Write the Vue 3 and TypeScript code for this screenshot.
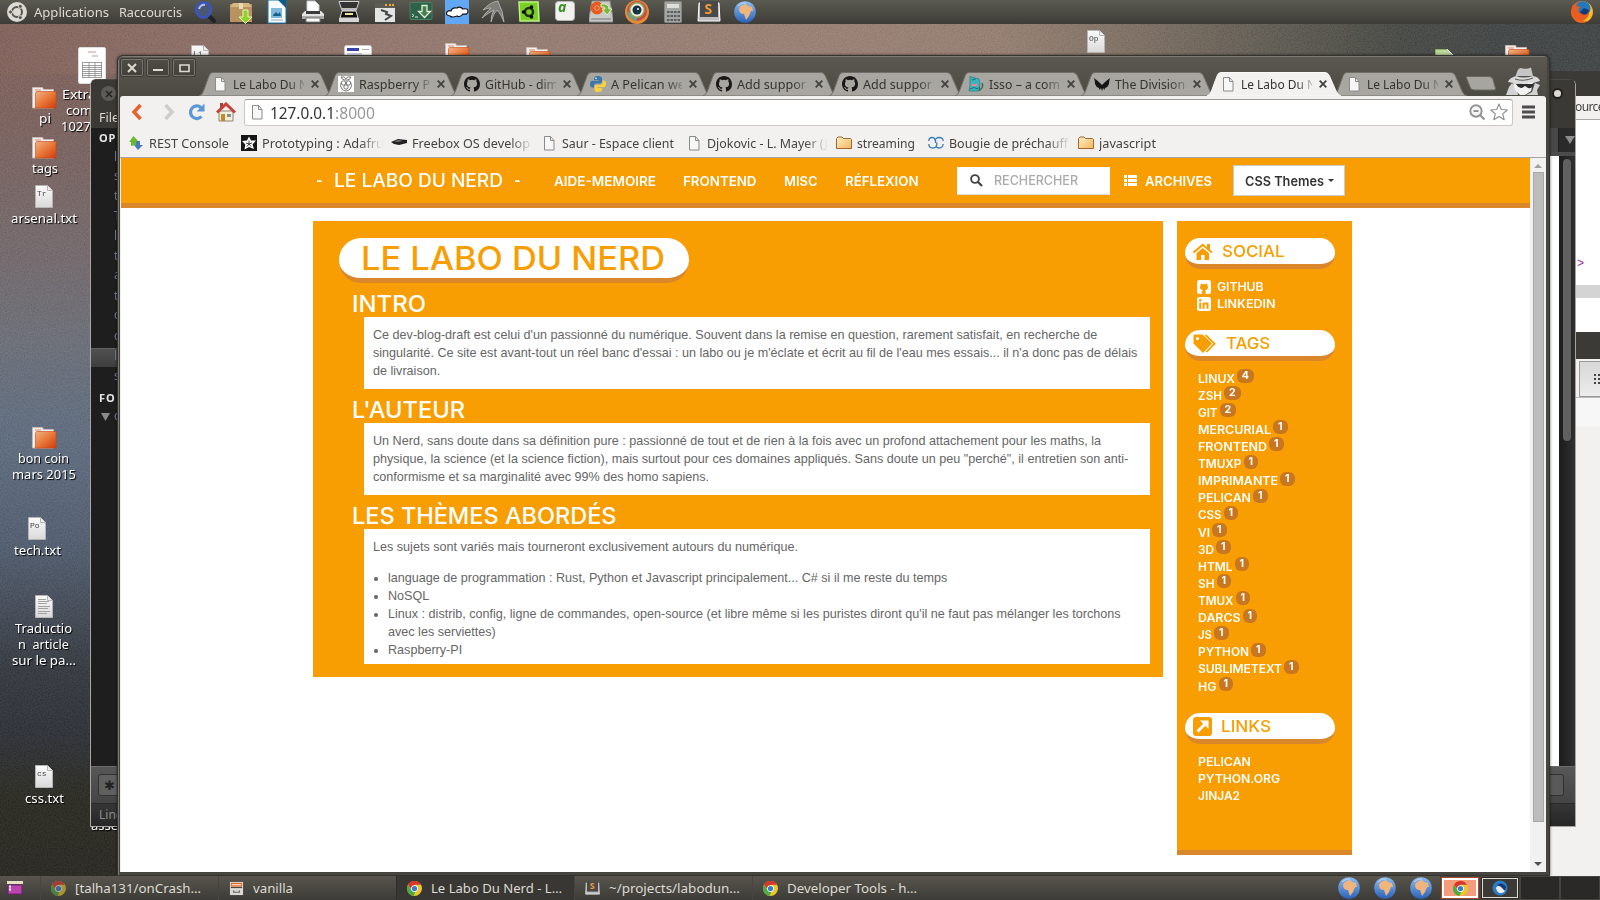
<script setup lang="ts">
// Stretches or condenses a label horizontally to a given advance width.
const vFit = {
  mounted(el: HTMLElement, binding: { value: number }) {
    if (!binding.value) return
    const natural = el.getBoundingClientRect().width
    el.style.transform = `scaleX(${binding.value / natural})`
    el.style.marginRight = `${binding.value - natural}px`
  },
}

const launchers = ['search', 'box', 'writer', 'printer', 'scanner', 'term', 'down', 'cloud', 'bird', 'ubgreen', 'letter', 'disk', 'eye', 'calc', 'sublime', 'globe']

const tabs = [
  { icon: 'page', text: 'Le Labo Du N', w: 75 },
  { icon: 'pi', text: 'Raspberry P', w: 71 },
  { icon: 'github', text: 'GitHub - dim', w: 73 },
  { icon: 'python', text: 'A Pelican we', w: 74 },
  { icon: 'github', text: 'Add suppor', w: 69 },
  { icon: 'github', text: 'Add suppor', w: 69 },
  { icon: 'isso', text: 'Isso – a com', w: 71 },
  { icon: 'division', text: 'The Division', w: 70 },
  { icon: 'page', text: 'Le Labo Du N', w: 75, active: true },
  { icon: 'page', text: 'Le Labo Du N', w: 75 },
]

const bookmarks = [
  { icon: 'rest', text: 'REST Console', w: 80, box: 92 },
  { icon: 'adafruit', text: 'Prototyping : Adafru', w: 122, box: 129, fade: true },
  { icon: 'freebox', text: 'Freebox OS develop', w: 118, box: 129, fade: true },
  { icon: 'page', text: 'Saur - Espace client', w: 112, box: 124 },
  { icon: 'page', text: 'Djokovic - L. Mayer (J', w: 121, box: 129, fade: true },
  { icon: 'folder', text: 'streaming', w: 58, box: 71 },
  { icon: 'rings', text: 'Bougie de préchauff', w: 119, box: 129, fade: true },
  { icon: 'folder', text: 'javascript', w: 57, box: 60 },
]

const nav = [
  { text: 'AIDE-MEMOIRE', w: 102 },
  { text: 'FRONTEND', w: 73.5 },
  { text: 'MISC', w: 33.5 },
  { text: 'RÉFLEXION', w: 73.5 },
]

const tags = [
  { t: 'LINUX', w: 37, n: 4 }, { t: 'ZSH', w: 24, n: 2 }, { t: 'GIT', w: 19.5, n: 2 },
  { t: 'MERCURIAL', w: 73, n: 1 }, { t: 'FRONTEND', w: 69, n: 1 }, { t: 'TMUXP', w: 43.5, n: 1 },
  { t: 'IMPRIMANTE', w: 80, n: 1 }, { t: 'PELICAN', w: 53, n: 1 }, { t: 'CSS', w: 23.5, n: 1 },
  { t: 'VI', w: 12, n: 1 }, { t: '3D', w: 16, n: 1 }, { t: 'HTML', w: 34.5, n: 1 },
  { t: 'SH', w: 16.5, n: 1 }, { t: 'TMUX', w: 35.5, n: 1 }, { t: 'DARCS', w: 42.5, n: 1 },
  { t: 'JS', w: 14, n: 1 }, { t: 'PYTHON', w: 51, n: 1 }, { t: 'SUBLIMETEXT', w: 84, n: 1 },
  { t: 'HG', w: 18.5, n: 1 },
]

const links = [{ t: 'PELICAN', w: 53 }, { t: 'PYTHON.ORG', w: 82 }, { t: 'JINJA2', w: 42 }]

const desktop = [
  { kind: 'dfolder', x: 32, y: 87 }, { kind: 'dfolder', x: 32, y: 137 }, { kind: 'dfolder', x: 32, y: 427 },
  { kind: 'dfolder', x: 445, y: 43 }, { kind: 'dfolder', x: 526, y: 47 }, { kind: 'dfolder', x: 1505, y: 45 },
  { kind: 'dfile', x: 35, y: 185, mark: 'Tr' }, { kind: 'dfile', x: 28, y: 517, mark: 'Po' },
  { kind: 'dtext', x: 35, y: 595 }, { kind: 'dfile', x: 35, y: 765, mark: 'cs' },
  { kind: 'dfile', x: 191, y: 45, mark: 'Li' }, { kind: 'dfile', x: 1087, y: 30, mark: 'Op' },
  { kind: 'dgreen', x: 1435, y: 49 }, { kind: 'dsheet', x: 78, y: 47 }, { kind: 'dcard', x: 344, y: 45 },
]

const captions = [
  { text: 'pi', x: 39, y: 110, w: 12 }, { text: 'tags', x: 32, y: 160, w: 26 },
  { text: 'arsenal.txt', x: 11, y: 210, w: 66 },
  { text: 'Extra', x: 62, y: 86, w: 34 }, { text: 'comp', x: 66, y: 102, w: 34 }, { text: '10270', x: 61, y: 118, w: 37 },
  { text: 'bon coin', x: 18, y: 450, w: 51 }, { text: 'mars 2015', x: 12, y: 466, w: 64 },
  { text: 'tech.txt', x: 14, y: 542, w: 47 }, { text: 'Traductio', x: 15, y: 620, w: 57 },
  { text: 'n  article', x: 18, y: 636, w: 51 }, { text: 'sur le pa…', x: 12, y: 652, w: 64 },
  { text: 'css.txt', x: 25, y: 790, w: 39 }, { text: 'assets', x: 91, y: 817, w: 38 },
]

const sideLetters = [
  { c: 'l', y: 158 }, { c: 's', y: 177 }, { c: 't', y: 197 }, { c: 'T', y: 217 }, { c: 'l', y: 237 }, { c: 't', y: 257 },
  { c: 'a', y: 276 }, { c: 't', y: 297 }, { c: 'c', y: 316 }, { c: 'c', y: 337 }, { c: 'l', y: 357 }, { c: 's', y: 377 }, { c: 'c', y: 417 },
]

const tasks = [
  { icon: 'chrome', text: '[talha131/onCrash…', w: 126, dim: true },
  { icon: 'cabinet', text: 'vanilla', w: 40 },
  { icon: 'chrome', text: 'Le Labo Du Nerd - L…', w: 131, active: true },
  { icon: 'sublime', text: '~/projects/labodun…', w: 131 },
  { icon: 'chrome', text: 'Developer Tools - h…', w: 130 },
]
</script>

<template>
  <div class="screen">
    <svg class="defs" width="0" height="0">
      <defs>
        <linearGradient id="gOrange" x1="0" y1="0" x2="1" y2="1"><stop offset="0" stop-color="#f3b183" /><stop offset=".5" stop-color="#e77838" /><stop offset="1" stop-color="#d23a0c" /></linearGradient>
        <linearGradient id="gBlue" x1="0" y1="0" x2="0" y2="1"><stop offset="0" stop-color="#8fbdf0" /><stop offset="1" stop-color="#2a62b8" /></linearGradient>
        <linearGradient id="gPaper" x1="0" y1="0" x2="0" y2="1"><stop offset="0" stop-color="#fbfbfb" /><stop offset="1" stop-color="#d9d9d9" /></linearGradient>
        <linearGradient id="gFolder" x1="0" y1="0" x2="1" y2="1"><stop offset="0" stop-color="#ffeec4" /><stop offset="1" stop-color="#f4b860" /></linearGradient>
        <filter id="grain" x="0" y="0" width="100%" height="100%"><feTurbulence type="fractalNoise" baseFrequency=".7" numOctaves="2" /><feColorMatrix values="1 0 0 0 0  1 0 0 0 0  1 0 0 0 0  0 0 0 0 1" /></filter>
      </defs>
      <symbol id="ubuntu" viewBox="0 0 24 24"><circle cx="12" cy="12" r="10" fill="#dcdad4" /><circle cx="12" cy="12" r="5" fill="none" stroke="#55534c" stroke-width="2" /><g fill="#55534c" stroke="#dcdad4"><circle cx="5.500" cy="12" r="2" /><circle cx="15.300" cy="6.400" r="2" /><circle cx="15.300" cy="17.600" r="2" /></g></symbol>
      <symbol id="search" viewBox="0 0 24 24"><path d="M15 15l6 6" stroke="#222" stroke-width="4" stroke-linecap="round" /><circle cx="10.500" cy="10" r="7.500" fill="#4b5873" stroke="#3a55c0" stroke-width="2.500" /><path d="M6 9a5 5 0 0 1 6-4" stroke="#b5c3e8" stroke-width="2" fill="none" /></symbol>
      <symbol id="box" viewBox="0 0 24 24"><path d="M1 4h22v18H1z" fill="#b9935f" /><path d="M1 7l3-4h16l3 4z" fill="#d6b684" /><path d="M10 3h4v6h-4z" fill="#eed9ae" /><path d="M14 10h5v7h4l-6.500 6.500L10 17h4z" fill="#92d32b" stroke="#e5f7b5" /></symbol>
      <symbol id="writer" viewBox="0 0 24 24"><path d="M3 0h12l6 6v17H3z" fill="#f8fbfd" stroke="#1f74a8" /><path d="M13 0h8v8z" fill="#075f91" /><rect x="6" y="8" width="11" height="10" fill="#82b9da" /><path d="M8 15l3-3 2 2 2-2 1 4H8z" fill="#10618c" /><path d="M6 20h12" stroke="#9ab" /></symbol>
      <symbol id="printer" viewBox="0 0 24 24"><path d="M6 1h8l4 4v8H6z" fill="#fff" stroke="#ccc" /><path d="M1 14l3-3h16l3 3v4H1z" fill="#e2e2e2" /><path d="M5 11h14v3H5z" fill="#3c3c3c" /><path d="M1 16h22v3H1z" fill="#a9a9a9" /><path d="M5 18h14v4H5z" fill="#fff" stroke="#777" /></symbol>
      <symbol id="scanner" viewBox="0 0 24 24"><path d="M2 1.500h20l-3 9H5z" fill="#333" stroke="#d5d5d5" /><path d="M5 8h14v3H5z" fill="#bbb" /><path d="M5 11h14l2 7H3z" fill="#111" stroke="#ddd" /><path d="M8 14h8" stroke="#eee498" stroke-width="2" /><path d="M2 18h20v4H2z" fill="#d5d5d5" /></symbol>
      <symbol id="term" viewBox="0 0 24 24"><rect x="2" y="3" width="20" height="19" fill="#e3e5e5" /><path d="M2 3h20v5H2z" fill="#5c5b56" /><path d="M12 5h2m2 0h2m1 0h2" stroke="#e8ae33" stroke-width="2" /><path d="M8 10l6 2-1 2 5 2-6 4" fill="none" stroke="#444" stroke-width="2" /></symbol>
      <symbol id="down" viewBox="0 0 24 24"><rect x="1" y="2.500" width="22" height="17" rx="1" fill="#2d6149" stroke="#4f7f62" /><path d="M3 14l2 1.500L3 17M6 17h3" stroke="#d7e9ce" fill="none" /><path d="M13 5.500h5v6h3.500l-6 6-6-6H13z" fill="#477c50" stroke="#dff3ce" stroke-width="1.300" /></symbol>
      <symbol id="cloud" viewBox="0 0 24 24"><path d="M0 0h24v24H0z" fill="#62a7f3" /><path d="M5 16q-5-1-3-4 2-2 4-1 1-4 6-3 3-2 6 1 5-1 5 2 0 4-5 3-3 4-6 2-5 2-7 0z" fill="#fff" stroke="#111" stroke-width="1.200" /></symbol>
      <symbol id="bird" viewBox="0 0 24 24"><path d="M2 10Q9 2 17 1l1 3q4 7 5 18-3-8-7-12-4 4-6 12 0-8 3-12-6 3-12 8 4-6 9-10-4 0-8 2z" fill="#7f7f7b" stroke="#c6c6c3" stroke-width=".7" /></symbol>
      <symbol id="ubgreen" viewBox="0 0 24 24"><path d="M2 2h19l1 19H3z" fill="#79cf26" stroke="#bdf381" stroke-width="1.500" /><circle cx="12" cy="12" r="4" fill="none" stroke="#22301a" stroke-width="2.500" /><circle cx="6.500" cy="12" r="1.800" /><circle cx="14.500" cy="7" r="1.800" /><circle cx="14.500" cy="17" r="1.800" /></symbol>
      <symbol id="letter" viewBox="0 0 24 24"><rect x="2.500" y="1.500" width="19" height="19" rx="3" fill="#f1f1ef" stroke="#b8b8b5" /><text x="5" y="12" font-family="Open Sans" font-size="14" font-weight="bold" font-style="italic" fill="#37901e">a</text></symbol>
      <symbol id="disk" viewBox="0 0 24 24"><path d="M3 1h18l3 17v4H0v-4z" fill="#c9c9c9" stroke="#888" /><circle cx="8" cy="8" r="4.500" fill="none" stroke="#e85b1e" stroke-width="4" /><circle cx="8" cy="8" r="2" fill="#e85b1e" /><path d="M12 4q8-1 8 5h3l-5 6-5-6h3q0-3-4-2z" fill="#7ab742" stroke="#e1f1ba" /><path d="M2 19h20" stroke="#777" /></symbol>
      <symbol id="eye" viewBox="0 0 24 24"><circle cx="12" cy="12" r="12" fill="#e78b39" /><circle cx="12" cy="11" r="10" fill="#cf4542" /><path d="M2 11a10 10 0 0 0 10 10v-4z" fill="#6aa08b" /><circle cx="12" cy="10" r="8" fill="#8ba25b" /><circle cx="12" cy="10" r="6.500" fill="#f1eadc" /><circle cx="12" cy="10" r="4.500" fill="#143345" /><circle cx="13" cy="9" r="1" fill="#fff" /></symbol>
      <symbol id="calc" viewBox="0 0 24 24"><rect x="3.500" y="1.500" width="17" height="21" rx="1" fill="#a5a5a2" stroke="#848480" /><path d="M6 4h12v4H6z" fill="#dde0da" /><path d="M6 12h13M6 16h13M6 20h13" stroke="#555f63" stroke-width="2" stroke-dasharray="2.500 1" /></symbol>
      <symbol id="sublime" viewBox="0 0 24 24"><path d="M2 3h20l1 18H1z" fill="#bdbdbd" stroke="#fff" /><path d="M3 1h18v16H3z" fill="#494949" /><text x="7.500" y="13.500" font-family="Open Sans" font-size="14" font-weight="bold" fill="#f29a31">S</text></symbol>
      <symbol id="globe" viewBox="0 0 24 24"><circle cx="12" cy="12" r="10.800" fill="url(#gBlue)" /><path d="M6 9q1-4 7-5l2 2 4 1 1 4h-2l-2 5-3 4-2-6q-5 0-5-5z" fill="#efb57d" /><path d="M5 6q4-4 8-3" stroke="#b8d7ff" fill="none" /></symbol>
      <symbol id="firefox" viewBox="0 0 24 24"><circle cx="12" cy="12" r="11" fill="#ee6321" /><path d="M12 1a11 11 0 0 1 9 17q-3 4-8 3 9-7 5-14-3-5-9-5z" fill="#f7bd26" /><circle cx="13" cy="8.500" r="7.500" fill="#2579b9" /><path d="M14 8l5 2q-1 6-5 7l-5-4z" fill="#173a7a" /><path d="M2 6q3-3 4 0l5 1q-4 2-2 5l3 2q4 2 7-2 0 7-7 8Q1 20 2 6z" fill="#e85d20" /></symbol>
      <symbol id="page" viewBox="0 0 16 16"><path d="M3.500 1.500h6l3.500 4v9.500H3.500z" fill="#f7f7f7" stroke="#8b8b8b" /><path d="M9.500 1.500v4H13" fill="none" stroke="#8b8b8b" /></symbol>
      <symbol id="pi" viewBox="0 0 16 16"><path d="M0 0h16v16H0z" fill="#fff" /><g fill="none" stroke="#777"><path d="M3 1q4-1 5 2 1-3 5-2-1 3-4 3H7Q4 4 3 1z" /><circle cx="5.500" cy="7" r="2.200" /><circle cx="10.500" cy="7" r="2.200" /><circle cx="8" cy="11" r="2.200" /><path d="M3.500 6Q1 10 4 13q4 4 8 0 3-3 .500-7" /></g></symbol>
      <symbol id="github" viewBox="0 0 16 16"><path fill="#191717" d="M8 0C3.580 0 0 3.580 0 8c0 3.540 2.290 6.530 5.470 7.590.4.070.55-.17.55-.38 0-.19-.01-.82-.01-1.490-2.010.37-2.530-.49-2.690-.94-.09-.23-.48-.94-.82-1.130-.28-.15-.68-.52-.01-.53.63-.01 1.080.58 1.230.82.72 1.210 1.870.87 2.330.66.070-.52.28-.87.51-1.070-1.780-.2-3.640-.89-3.640-3.950 0-.87.31-1.590.82-2.150-.08-.2-.36-1.020.08-2.120 0 0 .67-.21 2.200.82a7.600 7.600 0 0 1 4 0c1.530-1.040 2.200-.82 2.200-.82.44 1.100.16 1.920.08 2.120.51.56.82 1.270.82 2.150 0 3.070-1.870 3.750-3.650 3.950.29.25.54.73.54 1.480 0 1.070-.01 1.930-.01 2.200 0 .21.15.46.55.38A8.010 8.010 0 0 0 16 8c0-4.420-3.580-8-8-8z" /></symbol>
      <symbol id="python" viewBox="0 0 16 16"><path d="M8 0Q4 0 4 2.500V4h4.500v.7H2.500Q0 5 0 8.200q0 3.300 2.500 3.300H4V9.300Q4 7.500 6 7.500h4q2 0 2-2v-3Q12 0 8 0z" fill="#3b77a8" /><path d="M8 16q4 0 4-2.500V12H7.500v-.7h6Q16 11 16 7.800q0-3.300-2.500-3.300H12.500v2.200q0 2-2 2h-4q-2 0-2 2v3Q4.500 16 8 16z" fill="#f9d03f" /><circle cx="6" cy="2.200" r=".8" fill="#fff" /></symbol>
      <symbol id="isso" viewBox="0 0 16 16"><path d="M2 .5l5 1.500 4 1 1 5-1 7H1l1-6z" fill="#3bb4bd" stroke="#17737d" stroke-width=".6" /><path d="M4 4l4-1M2 13q4-3 8 0" stroke="#17737d" fill="none" /><path d="M4 8q2 3 5 0" stroke="#f9808f" stroke-width="2" fill="none" /><path d="M14 7q2 4-2 7l-1-3" stroke="#465" stroke-width="1.500" fill="none" /></symbol>
      <symbol id="division" viewBox="0 0 16 16"><path d="M0 2q4 3 6 5l2 2 2-2q2-2 6-5-1 3-1 6-1 3-4 4l-.5 2-1.500-2L8 15l-1-3-1.500 2L5 12Q2 11 1 8 1 5 0 2z" fill="#151515" /></symbol>
      <symbol id="rest" viewBox="0 0 16 16"><path d="M8 6h4v4h3L10 15l-4-5h2z" fill="#497ab9" /><path d="M5.500 1L10 6l-2 .5V10L3 11V7H1z" fill="#6bb92d" /></symbol>
      <symbol id="adafruit" viewBox="0 0 16 16"><path d="M0 0h16v16H0z" fill="#161616" /><path d="M8 1.500l2 4 5 0-3.500 4 1.500 4.500-5-2-4.500 2.500.8-5L1 6l5-.5z" fill="#fff" /><path d="M8 9V5.500M8 9l3-1M8 9L5 8M8 9l2 2.500M8 9l-2 2.500" stroke="#161616" stroke-width=".8" /></symbol>
      <symbol id="freebox" viewBox="0 0 16 16"><path d="M0 7l7-3 9 1v3l-8 2-5-1z" fill="#222" /><path d="M3 6l5-1 4 1-6 1z" fill="#777" /></symbol>
      <symbol id="folder" viewBox="0 0 16 16"><path d="M.5 13.500V3.500L2 2h4l1.500 1.500h7l1 1v9z" fill="url(#gFolder)" stroke="#a2672e" /></symbol>
      <symbol id="rings" viewBox="0 0 16 16"><g fill="none" stroke="#3a7dbb" stroke-width="1.300"><path d="M7 5.500Q7 2.500 4 2.500T.800 6M.8 9q0 4 4 4t4-4V7.500M15.200 6q0-3.500-4-3.500T7.500 6v2M15.200 9q-.5 4-4 4-3 0-3-2.500" /></g></symbol>
      <symbol id="chrome" viewBox="0 0 16 16"><circle cx="8" cy="8" r="8" fill="#e9c829" /><path d="M1 4a8 8 0 0 1 14 0H8L5 9z" fill="#d8362a" /><path d="M1 4l4 6 4 1-2 5A8 8 0 0 1 1 4z" fill="#4fa944" /><circle cx="8" cy="8" r="3.600" fill="#fff" /><circle cx="8" cy="8" r="2.800" fill="#3c7ad0" /></symbol>
      <symbol id="cabinet" viewBox="0 0 16 16"><path d="M1 1h14v14H1z" fill="#d9d8d2" /><path d="M2 2h12v4H2z" fill="#e26c27" /><path d="M3 4h10" stroke="#fff" /><path d="M2 7h12" stroke="#333" /><path d="M5 10v2h6v-2" fill="none" stroke="#666" stroke-width="1.300" /></symbol>
      <symbol id="dfolder" viewBox="0 0 28 40"><path d="M.5 21V.5h10l1 2h10V21z" fill="#eee" stroke="#c9b9b2" /><path d="M3 3h6" stroke="#e88660" /><path d="M3.500 21V6l1-1.500H24V21z" fill="url(#gOrange)" stroke="#c8451a" stroke-width=".6" /></symbol>
      <symbol id="dfile" viewBox="0 0 28 40"><path d="M.5.500h12l5 5v17H.5z" fill="url(#gPaper)" stroke="#b5b5b5" /><path d="M12.500.500v5h5" fill="#eee" stroke="#b5b5b5" /></symbol>
      <symbol id="dtext" viewBox="0 0 28 40"><path d="M.5.500h12l5 5v17H.5z" fill="url(#gPaper)" stroke="#b5b5b5" /><path d="M12.500.500v5h5" fill="#eee" stroke="#b5b5b5" /><path d="M3 4.500h8M3 6.500h11M3 8.500h9M3 11.500h12M3 13.500h10M3 16.500h12M3 18.500h9" stroke="#999" stroke-width=".9" /></symbol>
      <symbol id="dgreen" viewBox="0 0 28 40"><path d="M.5.500h12l5 5v17H.5z" fill="#bcd69c" stroke="#8bae68" /><path d="M12.500.500l5 5z" fill="#fff" stroke="#fff" /></symbol>
      <symbol id="dsheet" viewBox="0 0 28 40"><rect x=".5" y=".5" width="27" height="36" rx="1.500" fill="#fff" stroke="#ddd" /><path d="M10 5h8M14 9h6" stroke="#c99" /><path d="M4 15.500h20M4 18.500h20M4 20.500h20M4 22.500h20M4 24.500h20M4 26.500h20M4 28.500h20M4 30.500h20M4.500 15v16M11 15v16M17 15v16M23.500 15v16" stroke="#888" stroke-width=".8" /></symbol>
      <symbol id="dcard" viewBox="0 0 28 40"><rect x=".5" y=".5" width="27" height="30" rx="2" fill="#fff" stroke="#ccc" /><path d="M3 4.500h12" stroke="#3a3fae" stroke-width="3" /><path d="M18 4.500h7M3 9h15" stroke="#aab" /></symbol>
    </svg>
    <svg class="grain" width="1600" height="876"><rect width="1600" height="876" filter="url(#grain)" /></svg>

    <header class="panel">
      <svg class="ico24 ubu"><use href="#ubuntu" /></svg>
      <span v-fit="75" class="fit">Applications</span>
      <span v-fit="63" class="fit">Raccourcis</span>
      <div class="launchers"><svg v-for="l in launchers" :key="l" class="ico24"><use :href="'#' + l" /></svg></div>
      <svg class="ico24 ffx"><use href="#firefox" /></svg>
    </header>

    <svg v-for="(d, i) in desktop" :key="'d' + i" class="desk" viewBox="0 0 28 40" :style="{ left: d.x + 'px', top: d.y + 'px' }">
      <use :href="'#' + d.kind" width="28" height="40" />
      <text v-if="d.mark" x="2" y="10.500" class="mark">{{ d.mark }}</text>
    </svg>
    <div v-for="(c, i) in captions" :key="'c' + i" class="caption" :style="{ left: c.x + 'px', top: c.y + 'px' }"><span v-fit="c.w" class="fit">{{ c.text }}</span></div>

    <!-- inspector window on the far right -->
    <section class="inspector">
      <div class="ins-title"></div>
      <div class="ins-tabs">ource</div>
      <div class="ins-code"><span>&gt;</span></div>
      <div class="ins-sel"></div>
      <div class="ins-gap"></div>
      <div class="ins-dark"></div>
      <div class="ins-btn"><svg width="8" height="12"><path d="M1 2h2M5 2h2M1 6h2M5 6h2M1 10h2M5 10h2" stroke="#444" stroke-width="2" /></svg></div>
      <div class="ins-rest"></div>
    </section>

    <!-- editor window behind the browser -->
    <section class="editor">
      <div class="ed-head">
        <div class="ed-close"><svg width="8" height="8"><path d="M1 1l6 6M7 1L1 7" stroke="#222" stroke-width="1.500" /></svg></div>
        <i class="ed-dot"></i>
        <div class="ed-menu">File</div>
      </div>
      <div class="ed-body">
        <div class="ed-side"><b>OPEN</b></div>
        <div class="ed-right">
          <div class="ed-tabrow"><span></span><svg width="16" height="24"><path d="M6 8h10l-5 8z" fill="#8f8f8f" /></svg></div>
          <div class="ed-cols"><i></i><div><em></em></div></div>
        </div>
      </div>
      <div class="ed-find"><span>✱</span><i></i></div>
      <div class="ed-status">Line</div>
    </section>
    <div class="selrow"></div>
    <div v-for="s in sideLetters" :key="s.y" class="sl" :style="{ top: s.y - 9 + 'px' }">{{ s.c }}</div>
    <div class="fo">FO</div>
    <svg class="tri" width="10" height="8"><path d="M0 0h9l-4.500 8z" fill="#8a8a8a" /></svg>

    <!-- browser -->
    <section class="browser">
      <div class="frame-top">
        <div class="winbtns">
          <button><svg width="10" height="10"><path d="M1 1l8 8M9 1L1 9" stroke="#dfdbd2" stroke-width="2" /></svg></button>
          <button><svg width="10" height="10"><path d="M0 7h10" stroke="#dfdbd2" stroke-width="2" /></svg></button>
          <button><svg width="11" height="10"><path d="M1 2h9v6.500H1z" fill="none" stroke="#dfdbd2" stroke-width="1.600" /></svg></button>
        </div>
        <div class="tabs">
          <div v-for="(t, i) in tabs" :key="i" class="tab" :class="{ on: t.active }">
            <svg class="tabshape" viewBox="0 0 134 24"><path d="M0 24Q3 23 4.500 19L10 4Q11 .5 14 .5H118Q121 .5 122.500 4L129 19Q130.500 23 134 24z" /></svg>
            <svg class="ico16"><use :href="'#' + t.icon" /></svg>
            <div class="tabtext"><span v-fit="t.w" class="fit">{{ t.text }}</span></div>
            <svg class="tabx" width="8" height="8"><path d="M.7.700l6.600 6.600M7.300.700L.7 7.300" /></svg>
          </div>
          <svg class="newtab" width="30" height="15"><path d="M1 .5h22q3 0 4 3l2.500 9q0 1.500-2 1.500H8q-3 0-4-3L.5 2Q0 .5 1 .5z" fill="#a7a59f" stroke="#6a6862" /></svg>
          <svg class="incog" width="34" height="28" viewBox="0 0 34 28"><path d="M9.500 9L12 2.500q2-2.500 5-1 4 1 8-1L27 9z" fill="#c5c5c5" /><path d="M2 15q1-4 8-6 7 3 17 0 6 1 7 5-8 3-16 3T2 15z" fill="#dadada" /><path d="M6 16l-3 4-3 8h12l-1-6zM29 16l5 2-3 5 1 5H20l6-3z" fill="#d2d2d2" /><path d="M7 16q10 2 20-1l-2 9-6 4h-5l-5-5z" fill="#f2f2f2" /><path d="M9 12q8 3 18-1" stroke="#555" fill="none" /><path d="M10 17h17v2q-2 3-5 2l-3-2-3 2q-4 0-6-4z" fill="#2e2e2e" /></svg>
        </div>
      </div>

      <div class="toolbar">
        <svg class="t-back" width="12" height="18"><path d="M9.500 2L3 9l6.500 7" fill="none" stroke="#e8622a" stroke-width="3.500" /></svg>
        <svg class="t-fwd" width="12" height="18"><path d="M2.500 2L9 9l-6.500 7" fill="none" stroke="#cfcdca" stroke-width="3.500" /></svg>
        <svg class="t-rel" width="18" height="18"><path d="M13.500 13.500A6.300 6.300 0 1 1 13 4.500" fill="none" stroke="#5b96d5" stroke-width="3.200" /><path d="M16.500.500v8h-8z" fill="#5b96d5" /></svg>
        <svg class="t-home" width="20" height="20"><path d="M3 9h14v10H3z" fill="#f2eedd" stroke="#8d8674" /><path d="M4 1h3v5H4z" fill="#9a4a40" /><path d="M1 10.500L10 2l9 8.500" fill="none" stroke="#c9403a" stroke-width="3" /><path d="M5 12h4v7H5z" fill="#c38a28" /><path d="M11 12h4v3h-4z" fill="#8d8d8d" /></svg>
        <div class="omni">
          <svg class="ico16 op"><use href="#page" /></svg>
          <span v-fit="65" class="fit host">127.0.0.1</span><span v-fit="40" class="fit port">:8000</span>
          <svg class="zoomico" width="17" height="17"><circle cx="7" cy="7" r="5.700" fill="#f6f6f6" stroke="#939393" stroke-width="1.900" /><path d="M4.500 7h5M11 11l4.500 4.500" stroke="#939393" stroke-width="2" /></svg>
          <svg class="star" width="18" height="18"><path d="M9 1l2.300 5.500 6 .5-4.600 3.900 1.500 5.800L9 13.500l-5.200 3.200 1.500-5.800L.7 7l6-.5z" fill="#fff" stroke="#8d8d8d" stroke-width="1.100" stroke-linejoin="round" /></svg>
        </div>
        <svg class="burger" width="13" height="14"><path d="M0 2h13M0 7h13M0 12h13" stroke="#4c4c4c" stroke-width="3" /></svg>
      </div>
      <div class="bookmarks">
        <div v-for="(b, i) in bookmarks" :key="i" class="bm">
          <svg class="ico16"><use :href="'#' + b.icon" /></svg>
          <div class="bmtext" :class="{ fade: b.fade }" :style="{ width: b.box + 'px' }"><span v-fit="b.w" class="fit">{{ b.text }}</span></div>
        </div>
      </div>

      <div class="viewport">
        <div class="page">
          <div class="navbar">
            <div class="brand"><span v-fit="6.500" class="fit">-</span><span v-fit="169" class="fit">LE LABO DU NERD</span><span v-fit="6.500" class="fit">-</span></div>
            <nav><a v-for="n in nav" :key="n.text" v-fit="n.w" class="fit">{{ n.text }}</a></nav>
            <div class="searchbox">
              <svg width="13" height="13"><circle cx="5" cy="5" r="3.900" fill="none" stroke="#444" stroke-width="1.900" /><path d="M8 8l4 4" stroke="#444" stroke-width="2.300" /></svg>
              <span v-fit="84" class="fit">RECHERCHER</span>
            </div>
            <svg class="listico" width="13" height="11"><path d="M0 0h3v3H0zM4 0h9v3H4zM0 4h3v3H0zM4 4h9v3H4zM0 8h3v3H0zM4 8h9v3H4z" fill="#fff" /></svg>
            <a v-fit="67" class="fit archives">ARCHIVES</a>
            <div class="themes"><span v-fit="79" class="fit">CSS Themes</span><i></i></div>
          </div>

          <div class="columns">
            <main>
              <h1><span v-fit="304" class="fit">LE LABO DU NERD</span></h1>
              <h2><span v-fit="74" class="fit">INTRO</span></h2>
              <div class="card">
                <p>Ce dev-blog-draft est celui d'un passionné du numérique. Souvent dans la remise en question, rarement satisfait, en recherche de<br />singularité. Ce site est avant-tout un réel banc d'essai : un labo ou je m'éclate et écrit au fil de l'eau mes essais... il n'a donc pas de délais<br />de livraison.</p>
              </div>
              <h2><span v-fit="113" class="fit">L'AUTEUR</span></h2>
              <div class="card">
                <p>Un Nerd, sans doute dans sa définition pure : passionné de tout et de rien à la fois avec un profond attachement pour les maths, la<br />physique, la science (et la science fiction), mais surtout pour ces domaines appliqués. Sans doute un peu "perché", il entretien son anti-<br />conformisme et sa marginalité avec 99% des homo sapiens.</p>
              </div>
              <h2><span v-fit="264.500" class="fit">LES THÈMES ABORDÉS</span></h2>
              <div class="card last">
                <p>Les sujets sont variés mais tourneront exclusivement autours du numérique.</p>
                <ul>
                  <li>language de programmation : Rust, Python et Javascript principalement... C# si il me reste du temps</li>
                  <li>NoSQL</li>
                  <li>Linux : distrib, config, ligne de commandes, open-source (et libre même si les puristes diront qu'il ne faut pas mélanger les torchons<br />avec les serviettes)</li>
                  <li>Raspberry-PI</li>
                </ul>
              </div>
            </main>

            <aside>
              <div class="block social">
                <h3><svg width="20" height="17"><path d="M.5 9.500L9.700 1.700l9.200 7.800" fill="none" stroke="#f89e02" stroke-width="2" /><path d="M14 1h3v6l-3-2z" fill="#f89e02" /><path d="M3.500 10.300L9.700 5l6.300 5.300V17h-4.500v-5H8v5H3.500z" fill="#f89e02" /></svg><span v-fit="62.500" class="fit s1">SOCIAL</span></h3>
                <ul>
                  <li><svg width="14" height="14"><rect width="14" height="14" rx="2.500" fill="#fff" /><path d="M5.500 14v-2.200q-1.600.2-2.200-1.200M8.600 14v-3q0-.7-.4-1 2.800-.4 2.800-3 0-1-.7-1.800.2-.8-.1-1.700-.9 0-1.700.7-1.500-.4-3 0-.8-.7-1.700-.7-.3.900-.1 1.700-.7.800-.7 1.800 0 2.600 2.800 3-.4.300-.3 1v3z" fill="#f89e02" /></svg><span v-fit="46.500" class="fit">GITHUB</span></li>
                  <li><svg width="14" height="14"><rect width="14" height="14" rx="2.500" fill="#fff" /><path d="M2.200 5.400h2v6.300h-2zM5.500 5.400h2v.9q2.200-2.200 4 .3v5.100h-2V8.200q-.8-1.800-2 0v3.500h-2z" fill="#f89e02" /><circle cx="3.200" cy="3.300" r="1.200" fill="#f89e02" /></svg><span v-fit="58.500" class="fit">LINKEDIN</span></li>
                </ul>
              </div>
              <div class="block tagblock">
                <h3><svg width="24" height="19"><path d="M1 1h8.500l9 8.500-8.500 9L1 9.500z" fill="#f89e02" stroke="#f89e02" stroke-linejoin="round" /><circle cx="4.500" cy="4.500" r="1.600" fill="#fff" /><path d="M12.500 1L21.500 9.700 13.500 18" fill="none" stroke="#f89e02" stroke-width="1.800" /></svg><span v-fit="44" class="fit s2">TAGS</span></h3>
                <ul><li v-for="t in tags" :key="t.t"><span v-fit="t.w" class="fit">{{ t.t }}</span><b :class="{ wide: t.n > 1 }">{{ t.n }}</b></li></ul>
              </div>
              <div class="block linkblock">
                <h3><svg width="19" height="19"><rect width="19" height="19" rx="3" fill="#f89e02" /><path d="M4.500 14.500L12 7" stroke="#fff" stroke-width="3" /><path d="M7 3.500h8.500V12z" fill="#fff" /></svg><span v-fit="50" class="fit s3">LINKS</span></h3>
                <ul><li v-for="l in links" :key="l.t"><span v-fit="l.w" class="fit">{{ l.t }}</span></li></ul>
              </div>
            </aside>
          </div>
        </div>
        <div class="scroll">
          <svg width="16" height="14"><path d="M4 10h8L8 6z" fill="#a0a0a0" /></svg>
          <div class="thumb"></div>
          <svg class="sdown" width="16" height="16"><path d="M4 6h8l-4 4z" fill="#505050" /></svg>
        </div>
      </div>
    </section>

    <footer class="taskbar">
      <div class="showdesk"><svg width="16" height="14"><path d="M0 0h16v3H0z" fill="#e6dfc4" /><path d="M1 4h14v9H1z" fill="#b846ae" stroke="#6e1f6a" /><path d="M2 5.500h2M2 8.500h2" stroke="#fff" stroke-width="2" /></svg></div>
      <div v-for="(t, i) in tasks" :key="i" class="task" :class="{ on: t.active, dim: t.dim }">
        <svg class="ico15"><use :href="'#' + t.icon" /></svg><span v-fit="t.w" class="fit">{{ t.text }}</span>
      </div>
      <div class="tray">
        <svg v-for="i in 3" :key="i" class="ico24"><use href="#globe" /></svg>
      </div>
      <div class="ws sel"><div><svg class="ico15"><use href="#chrome" /></svg></div></div>
      <div class="ws mail"><div><svg width="16" height="16"><circle cx="8" cy="8" r="7.500" fill="#2a7cc7" /><path d="M4 8q1-3 5-2l4 2q1 4-3 5-5 1-6-5z" fill="#eee" /><path d="M5 5q5-4 9 2-1 5-2 3-3-4-7-5z" fill="#123a7a" /></svg></div></div>
      <div class="ws"></div>
      <div class="ws"></div>
    </footer>
  </div>
</template>

<style>
body { margin: 0; overflow: hidden; }
</style>

<style scoped>
* { box-sizing: border-box; }
.screen {
  position: relative; width: 1600px; height: 900px; overflow: hidden;
  font-family: "Noto Sans", "Open Sans", sans-serif; font-size: 13px;
  background:
    linear-gradient(90deg, #7b5c55 0, #86685f 200px, #8f756b 500px, #93796e 780px, #8f786b 1000px, #74675b 1150px, #56534b 1290px, #42443f 1400px, #3c4040 1500px) 0 24px / 1600px 50px no-repeat,
    linear-gradient(180deg, #7b5c56 24px, #755b56 110px, #6d6265 250px, #656871 340px, #586679 440px, #4c586a 540px, #3e4551 610px, #30343a 670px, #2a2d33 730px, #27261f 800px, #24231f 900px);
}
.defs { position: absolute; }
.grain { position: absolute; left: 0; top: 24px; mix-blend-mode: soft-light; opacity: .35; }
.fit { display: inline-block; flex: none; white-space: pre; transform-origin: left center; }
.ico24 { width: 24px; height: 24px; flex: none; }
.ico16 { width: 16px; height: 16px; flex: none; }
.ico15 { width: 15px; height: 15px; flex: none; }

.panel { position: relative; height: 24px; display: flex; align-items: center; color: #dfdbd2; background: linear-gradient(#5b5a51, #3d3c37); padding-left: 5px; }
.ubu { margin-right: 5px; }
.panel > .fit + .fit { margin-left: 10px; }
.launchers { display: flex; gap: 12px; margin-left: 11px; }
.ffx { margin-left: auto; margin-right: 6px; }

.desk { position: absolute; width: 28px; height: 40px; }
.mark { font: 8px "Liberation Mono", monospace; fill: #444; }
.caption { position: absolute; height: 16px; line-height: 16px; color: #fff; text-shadow: 1px 1px 1px #000; }

.inspector { position: absolute; left: 1549px; top: 71px; width: 51px; height: 805px; background: #f2f1f0; }
.ins-title { height: 25px; background: #3b3a36; }
.ins-tabs { height: 24px; border-bottom: 1px solid #aaa; padding-left: 26px; line-height: 22px; color: #444; font-size: 12px; letter-spacing: -.6px; overflow: hidden; }
.ins-code { height: 165px; background: #fff; padding: 137px 0 0 28px; font: 12px "Liberation Mono", monospace; color: #a020a0; }
.ins-sel { height: 13px; background: #d4d4d4; }
.ins-gap { height: 34px; background: #fff; }
.ins-dark { height: 27px; background: #3b3a36; }
.ins-btn { height: 36px; margin: 2px 0 0 30px; border: 1px solid #999; border-right: 0; background: linear-gradient(#d8d8d8, #ececec); padding: 11px 0 0 13px; line-height: 0; }
.ins-rest { height: 29px; background: #f7f7f7; border-top: 1px solid #bbb; }

.editor { position: absolute; left: 90px; top: 79px; width: 1486px; height: 748px; border: 1px solid #aaa69f; border-top-color: #4a4944; border-radius: 6px 6px 0 0; background: #1e1e1e; overflow: hidden; display: flex; flex-direction: column; }
.ed-head { height: 48px; background: #3a3935; display: grid; grid-template-columns: 1fr 1fr; padding: 6px 11px 0 10px; flex: none; }
.ed-close { width: 15px; height: 15px; border-radius: 50%; background: #5d5b55; display: grid; place-items: center; }
.ed-dot { justify-self: end; width: 11px; height: 11px; border-radius: 50%; background: #dcd9d0; border: 2px solid #22211f; margin: 2px 1px 0 0; }
.ed-menu { color: #dfdbd2; font-size: 12.500px; margin: 5px 0 0 -2px; }
.ed-body { flex: 1; display: flex; justify-content: space-between; }
.ed-side b { display: block; padding: 2px 8px; color: #e5e5e5; font-size: 11px; letter-spacing: .8px; }
.ed-right { width: 26px; display: flex; flex-direction: column; }
.ed-tabrow { height: 28px; display: flex; background: #2a2a2a; border-bottom: 4px solid #4b4b4b; }
.ed-tabrow span { width: 10px; background: #484848; border-right: 1px solid #222; }
.ed-cols { flex: 1; display: flex; }
.ed-cols i { width: 10px; background: #fff; }
.ed-cols div { width: 16px; background: linear-gradient(90deg, #1c1c1c, #303030); }
.ed-cols em { display: block; margin: 3px 4px; width: 8px; height: 282px; border-radius: 4px; background: #606060; }
.ed-find { height: 37px; background: linear-gradient(#575757, #444); border-top: 1px solid #6b6b6b; padding: 7px; display: flex; justify-content: space-between; flex: none; }
.ed-find span { width: 24px; height: 22px; border: 1px solid #333; background: #606060; color: #222; padding-left: 5px; line-height: 20px; border-radius: 3px; }
.ed-find i { width: 24px; height: 22px; margin-right: 4px; border: 1px solid #303030; border-radius: 3px; background: #595959; }
.ed-status { height: 23px; background: linear-gradient(#363636, #272727); border-top: 1px solid #2a2a2a; color: #8d8d8d; font-size: 12px; padding: 2px 8px; flex: none; }
.selrow { position: absolute; left: 91px; top: 348px; width: 26px; height: 19px; background: linear-gradient(#505050, #3e3e3e); border-top: 1px solid #606060; }
.sl { position: absolute; left: 114px; width: 3px; height: 16px; overflow: hidden; line-height: 16px; font-size: 12px; color: #6f8099; }
.fo { position: absolute; left: 99px; top: 390px; font-size: 11px; font-weight: bold; line-height: 16px; color: #e5e5e5; letter-spacing: 1px; }
.tri { position: absolute; left: 101px; top: 413px; }

.browser { position: absolute; left: 117px; top: 55px; width: 1433px; height: 821px; background: #45443e; border: 1px solid #34332e; border-radius: 6px 6px 0 0; padding: 0 3px 3px 2px; box-shadow: inset 1px 1px 0 #7c7a73, 0 0 3px rgba(0, 0, 0, .6); display: flex; flex-direction: column; }
.frame-top { height: 39px; flex: none; display: flex; background: linear-gradient(#5a5850, #4b4a43); margin: 1px -1px 0; }
.winbtns { display: flex; gap: 4px; padding: 2px 0 0 2px; }
.winbtns button { width: 22px; height: 17px; padding: 0; border: 1px solid #77756c; border-radius: 2px; background: linear-gradient(#4d4c45, #42413b); display: grid; place-items: center; box-shadow: 0 0 0 1px #3e3d38; }
.tabs { display: flex; align-items: flex-end; margin-left: 4px; }
.tab { position: relative; width: 134px; height: 24px; margin-right: -8px; display: flex; align-items: center; padding: 0 0 1px 13px; color: #35342f; flex: none; }
.tab.on { z-index: 2; }
.tabshape { position: absolute; left: 0; top: 0; width: 134px; height: 24px; fill: #a8a6a0; stroke: #706e67; stroke-width: 1; }
.on .tabshape { fill: #f2f1f0; stroke: #f9f9f8; }
.tab > .ico16 { position: relative; }
.tabtext { position: relative; width: 71px; overflow: hidden; margin-left: 5px; mask-image: linear-gradient(90deg, #000 78%, rgba(0, 0, 0, .25)); }
.tabx { position: relative; margin-left: 7px; stroke: #42413c; stroke-width: 1.800; }
.newtab { margin: 0 0 5px 7px; flex: none; }
.incog { margin: 0 0 1px 10px; flex: none; }

.toolbar { height: 35px; flex: none; background: #f2f1f0; display: flex; align-items: center; padding: 0 11px 3px 11px; border-radius: 3px 3px 0 0; }
.t-fwd { margin-left: 20px; }
.t-rel { margin-left: 13px; }
.t-home { margin-left: 10px; }
.omni { width: 1269px; height: 27px; margin-left: 8px; border: 1px solid #c9c8c6; border-top: 1px solid #999; border-radius: 3px; background: #fff; display: flex; align-items: center; font-size: 16.500px; }
.op { margin: 0 5px 0 4px; }
.host { color: #333; }
.port { color: #999; }
.zoomico { margin-left: auto; margin-right: 4px; }
.star { margin-right: 4px; }
.burger { margin-left: 9px; }
.bookmarks { height: 27px; flex: none; background: #f2f1f0; border-bottom: 1px solid #a5a4a2; display: flex; align-items: flex-start; padding: 3px 0 0 8px; color: #44433f; }
.bm { display: flex; align-items: center; height: 18px; }
.bmtext { margin-left: 5px; overflow: hidden; }
.bmtext.fade { mask-image: linear-gradient(90deg, #000 76%, transparent 94%); }

.viewport { flex: 1; display: flex; background: #fff; min-height: 0; border-left: 1px solid #eee; }
.page { width: 1409px; overflow: hidden; font-family: Inter, sans-serif; font-weight: 500; }
.navbar { height: 50px; background: #f89e02; border-bottom: 5px solid #da862b; padding-left: 195px; display: flex; align-items: center; color: #fff; font-size: 13.700px; }
.brand { display: flex; gap: 11px; font-size: 18px; width: 203.500px; }
nav { display: flex; gap: 27.500px; margin-left: 34px; font-weight: 600; }
.searchbox { width: 153px; height: 28px; margin: 0 0 0 38px; background: #fff; border-bottom: 1px solid #ddd; color: #aaa; font-size: 12.800px; display: flex; align-items: center; padding-left: 13px; gap: 11px; }
.listico { margin-left: 14px; }
.archives { margin-left: 8.500px; font-weight: 600; }
.themes { width: 112px; height: 31px; margin-left: 21px; background: #fff; border: 1px solid #ccc; color: #333; display: flex; align-items: center; padding-left: 11px; font-weight: 600; }
.themes i { border: 3px solid transparent; border-top-color: #333; border-bottom: 0; margin-left: 4px; }
.columns { display: flex; align-items: flex-start; gap: 14px; padding: 13px 0 0 192px; }
main { width: 850px; height: 456px; background: #f89e02; padding: 17px 13px 0 26px; }
h1, h2, h3, p, ul { margin: 0; padding: 0; font-weight: 500; }
h1 { width: 350px; height: 45px; border-radius: 22px; background: #fff; border-bottom: 5px solid #da862b; color: #f89e02; font-size: 32px; display: flex; align-items: center; padding-left: 22px; }
h2 { margin: 8px 0 0 12.500px; height: 26px; line-height: 26px; color: #fff; font-size: 22.500px; display: flex; }
.card { margin-left: 25px; height: 72px; background: #fff; padding: 9px 0 0 9px; font: 12.600px/18px "Liberation Sans", Arial, sans-serif; color: #666; white-space: nowrap; }
.card.last { height: 135px; }
.card ul { margin-top: 13px; padding-left: 15px; font-weight: 400; }
.card p { font-weight: 400; }
aside { width: 175px; height: 634px; background: #f89e02; border-bottom: 5px solid #da862b; padding: 17px 0 0 8px; }
.social { height: 92px; }
.tagblock { height: 383px; }
h3 { width: 150px; height: 31px; background: #fff; border-bottom: 5px solid #da862b; border-radius: 15px; color: #f89e02; font-size: 16.300px; display: flex; align-items: center; padding-left: 8px; }
.s1 { margin-left: 9px; }
.s2 { margin-left: 9px; }
.s3 { margin-left: 9px; }
.block ul { list-style: none; margin: 9.500px 0 0 13px; color: #fff; font-size: 11.200px; font-weight: 600; }
.block li { height: 17.110px; display: flex; align-items: center; line-height: 17px; }
.block li svg { margin: 0 6px 0 -1px; }
.block li b { margin: -6px 0 0 2px; width: 14.500px; height: 14px; border-radius: 6px; background: #c87720; font-size: 10.500px; line-height: 14px; text-align: center; font-weight: 700; }
.block li b.wide { width: 16.500px; }
.scroll { width: 16px; background: #f1f1f1; display: flex; flex-direction: column; align-items: center; }
.thumb { width: 11px; height: 650px; background: #bcbcbc; border: 1px solid #a8a8a8; flex: none; }
.sdown { margin-top: auto; }

.taskbar { position: absolute; left: 0; top: 876px; width: 1600px; height: 24px; display: flex; align-items: center; background: linear-gradient(#57554d, #3c3b37); color: #dfdbd2; }
.showdesk { width: 40px; height: 24px; padding: 5px 0 0 7px; line-height: 0; flex: none; }
.task { width: 178px; height: 24px; display: flex; align-items: center; padding-left: 10px; border-left: 1px solid #46453f; flex: none; }
.task .fit { margin-left: 9px; }
.task.on { background: #383733; border-left-color: #2e2d2a; }
.task.dim .ico15 { opacity: .6; }
.tray { display: flex; gap: 12px; margin-left: auto; margin-right: 7px; }
.ws { width: 40px; height: 24px; background: #2a2927; border: 1px solid #45443f; flex: none; padding: 1px; }
.ws div { height: 20px; display: grid; place-items: center; border: 1px solid #dcdad0; }
.ws.sel { background: #a8492c; }
.ws.sel div { background: #f59c7c; border: 2px solid #fff; }
.ws.mail div { background: #3b3a36; }
</style>
